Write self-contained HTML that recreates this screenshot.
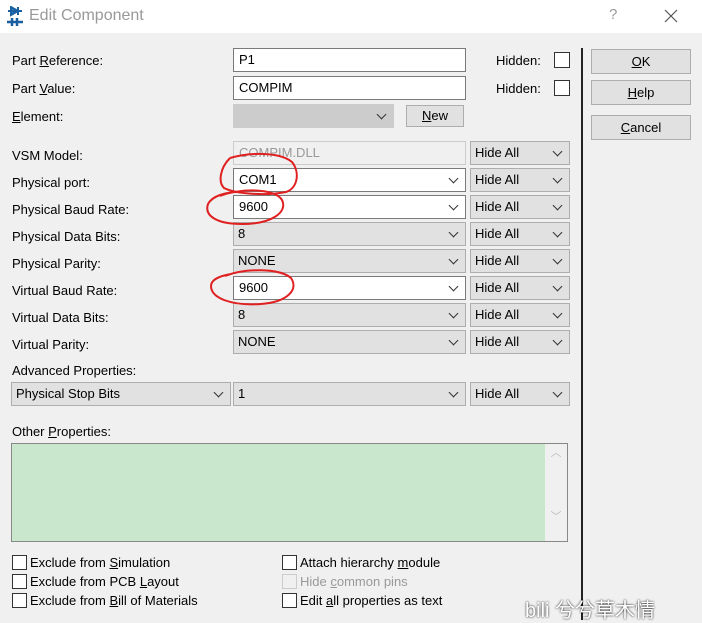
<!DOCTYPE html>
<html><head><style>
*{box-sizing:border-box;margin:0;padding:0}
body{width:702px;height:620px;background:#f0f0f0;font-family:"Liberation Sans",sans-serif;font-size:13px;color:#000;position:relative;overflow:hidden}
.a{position:absolute}
.lbl{position:absolute;left:12px;white-space:nowrap}
.f{position:absolute;border:1px solid #7a7a7a;background:#fff;height:24px;padding:3px 5px;white-space:nowrap}
.c{position:absolute;border:1px solid #adadad;background:#e1e1e1;height:24px;padding:3px 4px;white-space:nowrap}
.dd::after{content:"";position:absolute;right:8px;top:6px;width:6px;height:6px;border-right:1px solid #333;border-bottom:1px solid #333;transform:rotate(45deg)}
.btn{position:absolute;border:1px solid #adadad;background:#e1e1e1;text-align:center;height:25px;line-height:23px}
.cb{position:absolute;width:15px;height:15px;border:1px solid #333;background:#fff}
u{text-decoration:underline}
</style></head><body>
<div class="a" style="left:0;top:0;width:702px;height:33px;background:#fff"></div>
<svg class="a" style="left:6px;top:6px" width="18" height="20"><path d="M2 5h14M5 1v8l7-4z M12 1v8" stroke="#1a5fa0" stroke-width="2" fill="#2a8ad0"/><path d="M1 16h16M6 12v8M11 12v8" stroke="#1a5fa0" stroke-width="2.5"/></svg>
<div class="a" style="left:29px;top:7px;font-size:16px;color:#999">Edit Component</div>
<div class="a" style="left:609px;top:6px;font-size:15px;color:#999">?</div>
<svg class="a" style="left:664px;top:9px" width="14" height="14"><path d="M1 1L13 13M13 1L1 13" stroke="#555" stroke-width="1.2"/></svg>

<div class="lbl" style="top:53px">Part <u>R</u>eference:</div>
<div class="f" style="left:233px;top:48px;width:233px">P1</div>
<div class="lbl" style="top:81px">Part <u>V</u>alue:</div>
<div class="f" style="left:233px;top:76px;width:233px">COMPIM</div>
<div class="a" style="left:496px;top:53px">Hidden:</div><div class="cb" style="left:554px;top:52px;width:16px;height:16px"></div>
<div class="a" style="left:496px;top:81px">Hidden:</div><div class="cb" style="left:554px;top:80px;width:16px;height:16px"></div>
<div class="lbl" style="top:109px"><u>E</u>lement:</div>
<div class="c dd" style="left:233px;top:104px;width:161px;border-color:#ccc;background:#ccc"></div>
<div class="btn" style="left:406px;top:105px;width:58px;height:22px;line-height:20px"><u>N</u>ew</div>

<div class="a" style="left:581px;top:48px;width:2px;height:572px;background:#222"></div>
<div class="btn" style="left:591px;top:49px;width:100px"><u>O</u>K</div>
<div class="btn" style="left:591px;top:80px;width:100px"><u>H</u>elp</div>
<div class="btn" style="left:591px;top:115px;width:100px"><u>C</u>ancel</div>

<div class="lbl" style="top:148px">VSM Model:</div>
<div class="f" style="left:233px;top:141px;width:233px;border-color:#ccc;background:#f0f0f0;color:#999">COMPIM.DLL</div>
<div class="c dd" style="left:470px;top:141px;width:100px">Hide All</div>

<div class="lbl" style="top:175px">Physical port:</div>
<div class="f dd" style="left:233px;top:168px;width:233px">COM1</div>
<div class="c dd" style="left:470px;top:168px;width:100px">Hide All</div>
<div class="lbl" style="top:202px">Physical Baud Rate:</div>
<div class="f dd" style="left:233px;top:195px;width:233px">9600</div>
<div class="c dd" style="left:470px;top:195px;width:100px">Hide All</div>
<div class="lbl" style="top:229px">Physical Data Bits:</div>
<div class="c dd" style="left:233px;top:222px;width:233px">8</div>
<div class="c dd" style="left:470px;top:222px;width:100px">Hide All</div>
<div class="lbl" style="top:256px">Physical Parity:</div>
<div class="c dd" style="left:233px;top:249px;width:233px">NONE</div>
<div class="c dd" style="left:470px;top:249px;width:100px">Hide All</div>
<div class="lbl" style="top:283px">Virtual Baud Rate:</div>
<div class="f dd" style="left:233px;top:276px;width:233px">9600</div>
<div class="c dd" style="left:470px;top:276px;width:100px">Hide All</div>
<div class="lbl" style="top:310px">Virtual Data Bits:</div>
<div class="c dd" style="left:233px;top:303px;width:233px">8</div>
<div class="c dd" style="left:470px;top:303px;width:100px">Hide All</div>
<div class="lbl" style="top:337px">Virtual Parity:</div>
<div class="c dd" style="left:233px;top:330px;width:233px">NONE</div>
<div class="c dd" style="left:470px;top:330px;width:100px">Hide All</div>

<div class="lbl" style="top:363px">Advanced Properties:</div>
<div class="c dd" style="left:11px;top:382px;width:220px">Physical Stop Bits</div>
<div class="c dd" style="left:233px;top:382px;width:233px">1</div>
<div class="c dd" style="left:470px;top:382px;width:100px">Hide All</div>

<div class="lbl" style="top:424px">Other <u>P</u>roperties:</div>
<div class="a" style="left:11px;top:443px;width:557px;height:99px;border:1px solid #888;background:#c9e7cc"></div>
<div class="a" style="left:545px;top:444px;width:22px;height:97px;background:#f0f0f0;color:#bbb;font-size:11px;text-align:center">︿<br><br><br><br><br>﹀</div>

<div class="cb" style="left:12px;top:555px"></div><div class="a" style="left:30px;top:555px">Exclude from <u>S</u>imulation</div>
<div class="cb" style="left:12px;top:574px"></div><div class="a" style="left:30px;top:574px">Exclude from PCB <u>L</u>ayout</div>
<div class="cb" style="left:12px;top:593px"></div><div class="a" style="left:30px;top:593px">Exclude from <u>B</u>ill of Materials</div>
<div class="cb" style="left:282px;top:555px"></div><div class="a" style="left:300px;top:555px">Attach hierarchy <u>m</u>odule</div>
<div class="cb" style="left:282px;top:574px;border-color:#ccc;background:#f0f0f0"></div><div class="a" style="left:300px;top:574px;color:#999">Hide <u>c</u>ommon pins</div>
<div class="cb" style="left:282px;top:593px"></div><div class="a" style="left:300px;top:593px">Edit <u>a</u>ll properties as text</div>
<div class="a" style="left:525px;top:594px;font-size:20px;color:#fff;text-shadow:0 0 2px #000;font-family:'Liberation Sans','Noto Sans CJK SC',sans-serif;white-space:nowrap">bili 兮兮草木情</div>

<svg class="a" style="left:0;top:0" width="702" height="620" fill="none" stroke="#e02020" stroke-width="2">
<path d="M230 158c20-6 50-6 62 4c8 10 6 26-6 30c-20 4-50 2-62-4c-6-6-4-20 6-30"/>
<path d="M220 196c20-8 55-8 62 4c6 12-10 24-40 24c-25 0-38-8-34-20c4-8 18-12 30-12"/>
<path d="M225 276c20-8 55-8 66 2c8 12-4 24-30 26c-30 2-50-6-50-18c0-6 8-10 20-12"/>
</svg>
</body></html>
